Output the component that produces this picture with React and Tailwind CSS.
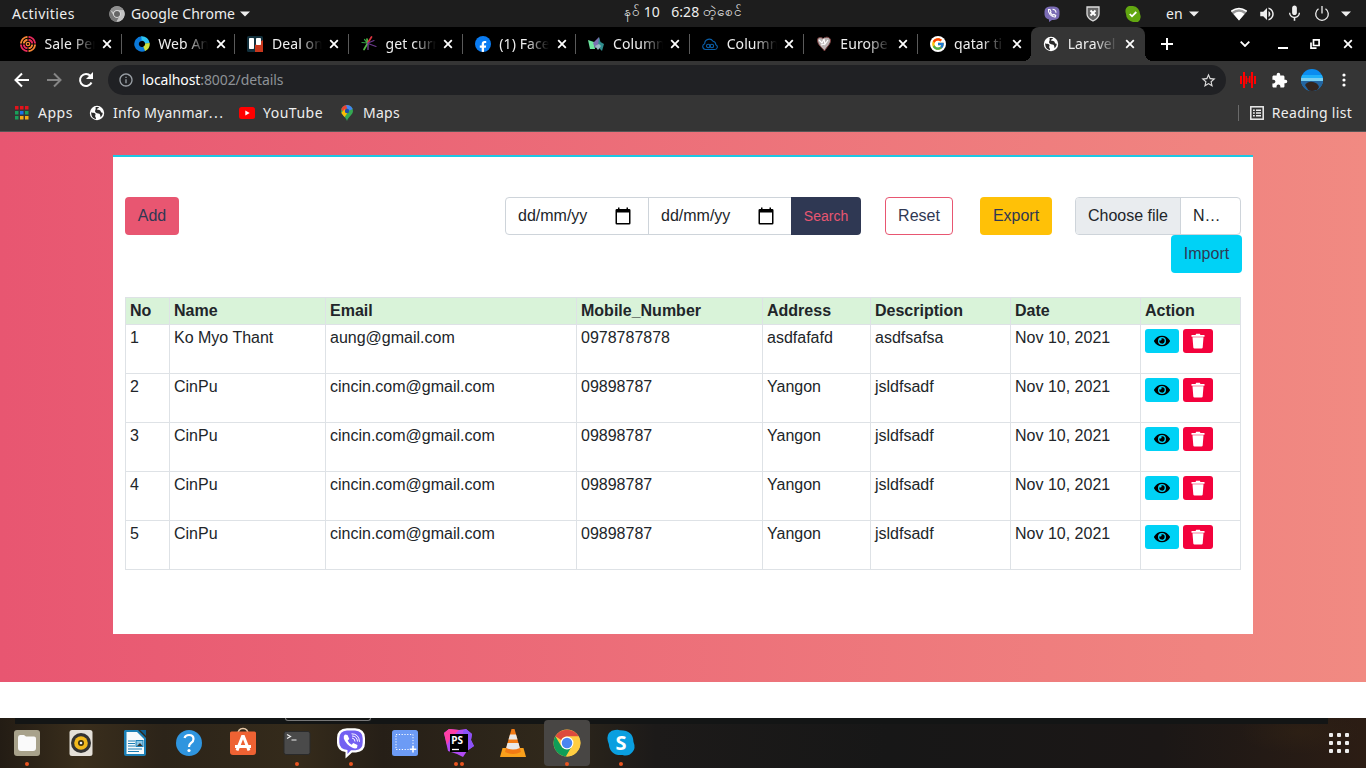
import React from "react";
import { FaEye, FaFacebookF } from "react-icons/fa";
import { MdExtension, MdStarBorder, MdMic, MdVolumeUp, MdInfoOutline } from "react-icons/md";
import { FcGoogle } from "react-icons/fc";

const FADE = "[mask-image:linear-gradient(to_right,black_55%,transparent_100%)]";

function Chrome({ className, mono }) {
  const c = mono ? ["#8f8f8f", "#777", "#c4c4c4", "#666", "#e4e4e4"] : ["#dd4b3e", "#0f9d58", "#ffcd42", "#4a86f0", "#fff"];
  return (
    <svg viewBox="0 0 48 48" className={className}>
      <circle cx="24" cy="24" r="23" fill={c[2]} />
      <path d="M4 12.5A23 23 0 0 1 44 13H24a11 11 0 0 0-10 6z" fill={c[0]} />
      <path d="M4 12.5A23 23 0 0 0 22 47l10-17a11 11 0 0 1-18-1z" fill={c[1]} />
      <path d="M44 13H24a11 11 0 0 1 9 17L23 47A23 23 0 0 0 44 13z" fill={c[2]} />
      <circle cx="24" cy="24" r="11" fill={c[4]} />
      <circle cx="24" cy="24" r="9" fill={c[3]} />
    </svg>
  );
}

function Globe({ className }) {
  return (
    <svg viewBox="0 0 16 16" className={className}>
      <circle cx="8" cy="8" r="7.2" fill="#fff" />
      <path d="M2.200 7.200c1.400.900 2.900.300 4 1.400.900 1-.2 1.600 0 2.800.2.900 1 1.200.8 2.600-3-.4-5-3-4.800-6.800z" fill="#2b2b2b" />
      <path d="M6.500 2.300c1-.5 2.500-.4 3.500 0-.2 1.200-2 1-2.200 2.200 1.700.500 3.700.200 4 1.900.2 1.300 1.100 1 1.900 1.400-.1 2-.9 3.500-2 4.400-.6-1.400-.2-2.400-1.300-3.400-1.300-1-3.300-.4-4.200-1.900-.7-1.400 1.100-2.300.3-4.600z" fill="#2b2b2b" />
    </svg>
  );
}

const favicons = {
  sale: (
    <svg viewBox="0 0 16 16" className="size-4 shrink-0" fill="none" strokeWidth="1.900">
      <path d="M8.500.900A7.200 7.200 0 0 1 15.100 7.500M7.500 15.100A7.200 7.200 0 0 1 .9 8.500" stroke="#e8295c" />
      <path d="M.9 7.500A7.200 7.200 0 0 1 7.500.900M15.100 8.500A7.200 7.200 0 0 1 8.500 15.100" stroke="#f58634" />
      <path d="M8.500 3.700A4.400 4.400 0 0 1 12.300 7.500M7.500 12.300A4.400 4.400 0 0 1 3.700 8.500" stroke="#e8295c" />
      <path d="M3.700 7.500A4.400 4.400 0 0 1 7.500 3.700M12.300 8.500A4.400 4.400 0 0 1 8.500 12.300" stroke="#f58634" />
      <circle cx="8" cy="8" r="1.700" stroke="#f58634" strokeWidth="1.300" />
    </svg>
  ),
  web: (
    <svg viewBox="0 0 16 16" className="size-4 shrink-0" fill="none" strokeWidth="4.600">
      <path d="M8 2.600A5.400 5.400 0 1 0 10.600 12.700" stroke="#0a78d8" />
      <path d="M7.500 2.600A5.400 5.400 0 0 1 13.400 7.500" stroke="#2cc4f4" />
      <path d="M13.400 7.300A5.400 5.400 0 0 1 10.200 12.900" stroke="#cde23c" />
    </svg>
  ),
  trello: (
    <svg viewBox="0 0 16 16" className="size-4 shrink-0">
      <rect width="16" height="16" rx="1.500" fill="#12303c" />
      <path d="M8 16V9l8-5v12z" fill="#c8371d" />
      <rect x="2" y="2" width="5" height="11" rx=".8" fill="#fff" />
      <rect x="9" y="2" width="5" height="7" rx=".8" fill="#fff" />
    </svg>
  ),
  rays: (
    <svg viewBox="0 0 16 16" className="size-4 shrink-0" strokeWidth="1.200" strokeLinecap="round">
      <path d="M6.500 7 1 6.500M6.500 7 3.500 3.500" stroke="#2f9e44" />
      <path d="M6.500 7 6 3M6.500 7.500l-3.500 6" stroke="#54b948" strokeWidth="1.700" />
      <path d="M7 7.500v6" stroke="#7c4a9e" />
      <path d="M7 6.500 10.500 1" stroke="#d9333f" strokeWidth="1.700" />
      <path d="M7 7 13 4.500M7 7.500l8 3" stroke="#6c3a8e" />
    </svg>
  ),
  facebook: (
    <span className="flex size-4 shrink-0 items-end justify-center overflow-hidden rounded-full bg-[#0a7cf2]">
      <FaFacebookF className="size-3 translate-y-px text-white" />
    </span>
  ),
  prism: (
    <svg viewBox="0 0 16 16" className="size-4 shrink-0">
      <path d="M0 4l6 2 1 7-5 0z" fill="#6ee7a0" />
      <path d="M5 7l6-6 1 9-5 2z" fill="#7b70b0" />
      <path d="M11 1l1.500 5L16 8l-2 7-4-4z" fill="#2f8d8d" />
      <path d="M7 10l4-2 2 2-3 4z" fill="#9bb8c4" />
    </svg>
  ),
  cloud: (
    <svg viewBox="0 0 16 16" className="size-4 shrink-0" fill="none" stroke="#0a5ea8" strokeWidth="1.100">
      <path d="M3.500 13.500a3 3 0 0 1-.8-5.800A4.500 4.500 0 0 1 11 5.300a3.600 3.600 0 0 1 2.800 3.400 2.500 2.500 0 0 1-1 4.800z" />
      <circle cx="6.200" cy="10" r="1.700" />
      <circle cx="9.900" cy="10" r="1.700" />
    </svg>
  ),
  heart: (
    <svg viewBox="0 0 16 16" className="size-4 shrink-0">
      <path d="M1.500 4c0-3 4-3 6-1 2-3 6.500-2 7 1 .5 4-4 7-6 11C6.500 12 1.500 9 1.500 4z" fill="#b9b2b2" stroke="#7b3c3c" />
      <path d="M3 4l3 3 2-4 1 5 3-4M5 9l4-1" stroke="#fff" strokeWidth="1.200" fill="none" />
    </svg>
  ),
  google: (
    <span className="flex size-4 shrink-0 items-center justify-center rounded-full bg-white">
      <FcGoogle className="size-[14px]" />
    </span>
  ),
  globe: <Globe className="size-4 shrink-0" />,
};

function Close({ className = "" }) {
  return (
    <svg viewBox="0 0 10 10" className={"size-2.5 shrink-0 " + className} stroke="#fff" strokeWidth="1.800">
      <path d="M1.200 1.200l7.600 7.600M8.800 1.200 1.200 8.800" />
    </svg>
  );
}

const tabs = [
  ["sale", "Sale Per"],
  ["web", "Web An"],
  ["trello", "Deal on"],
  ["rays", "get curr"],
  ["facebook", "(1) Face"],
  ["prism", "Column"],
  ["cloud", "Column"],
  ["heart", "Europe"],
  ["google", "qatar ti"],
  ["globe", "Laravel"],
];

function TopBar() {
  return (
    <header className="grid h-[27px] grid-cols-[1fr_auto_1fr] items-center bg-[#1d1d1d] text-[14px] text-[#eee]">
      <div className="flex items-center pl-3">
        <span className="w-[97px] tracking-[0.45px]">Activities</span>
        <Chrome mono className="size-4" />
        <span className="ml-1.5 w-[105px] whitespace-nowrap tracking-[0.05px]">Google Chrome</span>
        <Caret className="ml-1" />
      </div>
      <div className="flex h-[27px] items-center whitespace-pre pb-[4px] text-[14px]">
        <span className="text-[13.500px]">နဝ်</span>
        <span className="tracking-[0.1px]"> 10   6:28 </span>
        <span className="text-[13.500px]">တဲ့စေင်</span>
      </div>
      <div className="flex h-full items-center justify-end">
        <svg viewBox="0 0 16 16" className="mr-[25px] size-4">
          <path d="M6 .5h4q5.500.500 5.500 5v3q0 5-5.500 5.500H8L5 16v-2.500Q.8 12.500.5 8.500v-3Q.5 1 6 .500z" fill="#7b6cb5" />
          <path d="M4.500 3.500l1.500 0 1 2.300-.8.900 2.500 2.500 1-.8 2 1-.4 1.600C7.500 11.500 3.700 7 4.500 3.500zM8.500 3.200a3.500 3.500 0 0 1 3.500 3.500" fill="none" stroke="#fff" strokeWidth="1.100" />
        </svg>
        <svg viewBox="0 0 16 16" className="mr-6 size-4">
          <path d="M2 1h12v7q0 4-6 7-6-3-6-7z" fill="#666" stroke="#ddd" strokeWidth="1.300" />
          <path d="M5.500 4.500l5 5M10.500 4.500l-5 5" stroke="#fff" strokeWidth="2" />
        </svg>
        <svg viewBox="0 0 16 16" className="mr-[25px] size-4">
          <path d="M4 0h4a8 8 0 0 1 7 8q2 5-2 8H8A8 8 0 0 1 1 8Q-1 2 4 0z" fill="#62a711" />
          <path d="M4.800 8l2.200 2.300L11.300 6" stroke="#fff" strokeWidth="1.800" fill="none" />
        </svg>
        <span className="w-[23px]">en</span>
        <Caret className="mr-[32px]" />
        <svg viewBox="0 0 16 14" className="mr-[11px] h-3.5 w-4">
          <path d="M0 4.500Q8-2 16 4.500L8 13.500z" fill="#999" />
          <path d="M2.500 7Q8 2.500 13.500 7L8 13.500z" fill="#fff" />
          <path d="M.3 4.300Q8-1.500 15.700 4.300" stroke="#fff" strokeWidth="1.500" fill="none" />
        </svg>
        <MdVolumeUp className="mr-[9px] size-[18px] text-[#eee]" />
        <MdMic className="mr-2.5 size-[19px] text-[#eee]" />
        <svg viewBox="0 0 16 16" className="mr-[11px] size-4" fill="none" stroke="#eee" strokeWidth="1.300">
          <path d="M4.500 2.800a6.300 6.300 0 1 0 7 0M8 0v7.500" />
        </svg>
        <Caret className="mr-[15px]" />
      </div>
    </header>
  );
}

function Caret({ className = "" }) {
  return (
    <svg viewBox="0 0 10 6" className={"h-1.5 w-2.5 shrink-0 " + className}>
      <path d="M0 .5h10L5 5.500z" fill="#eee" />
    </svg>
  );
}

function TabStrip() {
  return (
    <div className="flex h-[34px] bg-black pl-[8px] text-[14px] text-[#eee]">
      {tabs.map(([icon, title], i) => {
        const active = i === 9;
        return (
          <div
            key={i}
            className={
              "relative flex w-[113.700px] shrink-0 items-center pl-[12px] " +
              (active ? "rounded-t-lg bg-[#353535]" : "")
            }
          >
            {favicons[icon]}
            <span className={"ml-[8.500px] w-[50px] whitespace-nowrap pb-px tracking-[0.1px] " + FADE}>{title}</span>
            <Close className="ml-[7.500px]" />
            {i < 8 && <span className="absolute right-0 top-[7px] h-5 w-px bg-[#5a5a5a]" />}
            {active && (
              <>
                <span className="absolute -left-2 bottom-0 size-2 bg-[radial-gradient(circle_at_0_0,#000_8px,#353535_8px)]" />
                <span className="absolute -right-2 bottom-0 size-2 bg-[radial-gradient(circle_at_100%_0,#000_8px,#353535_8px)]" />
              </>
            )}
          </div>
        );
      })}
      <svg viewBox="0 0 12 12" className="ml-4 size-3 self-center" stroke="#fff" strokeWidth="2">
        <path d="M6 0v12M0 6h12" />
      </svg>
      <div className="ml-auto flex items-center pr-[13px]">
        <svg viewBox="0 0 10 6" className="mr-7 h-1.5 w-2.5" fill="none" stroke="#fff" strokeWidth="1.800">
          <path d="M.7.700 5 5 9.300.700" />
        </svg>
        <span className="mr-[22px] mt-2 h-[2px] w-[10px] bg-white" />
        <svg viewBox="0 0 10 10" className="mr-[23px] size-2.5" fill="none" stroke="#fff" strokeWidth="1.700">
          <path d="M3.500.900h5.600v5.600H3.500zM1 3.500v5.600h5.500" />
        </svg>
        <Close />
      </div>
    </div>
  );
}

function AddressBar() {
  return (
    <div className="flex h-[38px] items-center bg-[#353535] pl-[14px] text-[14px]">
      <svg viewBox="0 0 16 16" className="size-4" fill="none" stroke="#fff" strokeWidth="2">
        <path d="M15 8H2M8 1.500 1.500 8 8 14.500" />
      </svg>
      <svg viewBox="0 0 16 16" className="ml-4 size-4" fill="none" stroke="#858585" strokeWidth="2">
        <path d="M1 8h13M8 1.500 14.500 8 8 14.500" />
      </svg>
      <svg viewBox="0 0 16 16" className="ml-4 size-4" fill="none" stroke="#fff" strokeWidth="2">
        <path d="M13.500 10.500A6 6 0 1 1 12.500 4" />
        <path d="M15 0v7H8z" fill="#fff" stroke="none" />
      </svg>
      <div className="ml-[14px] flex h-[30px] w-[1118px] items-center rounded-full bg-[#202124] pl-[10px] pr-[9.500px]">
        <MdInfoOutline className="size-4 text-[#9aa0a6]" />
        <span className="ml-2 pb-0.5 tracking-[-0.1px] text-white">localhost</span>
        <span className="pb-0.5 tracking-[-0.1px] text-[#8e9297]">:8002/details</span>
        <MdStarBorder className="ml-auto size-[17px] text-[#ddd]" />
      </div>
      <svg viewBox="0 0 16 16" className="ml-[14px] size-4" fill="#f00">
        <path d="M0 4h2v8H0zM3 0h2v16H3zM5.500 4h1.500v8H5.500zM7.500 6h1v4h-1zM9 4h1.500v7H9zM11 0h2v16h-2zM14 4h2v8h-2z" />
      </svg>
      <MdExtension className="ml-[15px] size-[17px] text-white" />
      <svg viewBox="0 0 22 22" className="ml-[13px] size-[22px]">
        <clipPath id="avatar"><circle cx="11" cy="11" r="11" /></clipPath>
        <g clipPath="url(#avatar)">
          <rect width="22" height="22" fill="#0a8cf0" />
          <rect y="6" width="22" height="3" fill="#1fb0fa" />
          <rect y="9" width="22" height="3" fill="#7ad0f2" />
          <rect y="12" width="22" height="11" fill="#2465a0" />
          <path d="M4 16q3-4 8-3t6 5l-2 4H8z" fill="#33251f" />
        </g>
      </svg>
      <svg viewBox="0 0 4 14" className="ml-[19px] h-3.5 w-1" fill="#fff">
        <circle cx="2" cy="2" r="1.600" /><circle cx="2" cy="7" r="1.600" /><circle cx="2" cy="12" r="1.600" />
      </svg>
    </div>
  );
}

function Bookmarks() {
  return (
    <div className="flex h-[33px] items-center border-b border-[#555] bg-[#353535] pb-1 pl-[15px] text-[14px] text-[#eee]">
      <svg viewBox="0 0 14 14" className="size-[14px]">
        <path d="M0 0h3.500v3.500H0zM5 0h3.500v3.500H5zM10 0h3.500v3.500H10z" fill="#e3131b" />
        <path d="M0 5h3.500v3.500H0zM10 5h3.500v3.500H10z" fill="#19a05a" /><path d="M5 5h3.500v3.500H5z" fill="#1a73e8" />
        <path d="M0 10h3.500v3.500H0z" fill="#19a05a" /><path d="M5 10h3.500v3.500H5zM10 10h3.500v3.500H10z" fill="#f9ab16" />
      </svg>
      <span className="ml-[9px] w-[51px] pb-0.5 tracking-[0.5px]">Apps</span>
      <Globe className="size-4" />
      <span className="ml-2 w-[126px] whitespace-nowrap pb-0.5 tracking-[0.2px]">
        Info Myanmar<span className="tracking-[1.500px]">...</span>
      </span>
      <svg viewBox="0 0 16 12" className="h-3 w-4">
        <rect width="16" height="12" rx="2.500" fill="#f00" /><path d="M6.300 3.500 10.700 6 6.300 8.500z" fill="#fff" />
      </svg>
      <span className="ml-2 w-[78px] pb-0.5 tracking-[0.5px]">YouTube</span>
      <svg viewBox="0 0 12 16" className="h-4 w-3">
        <clipPath id="pin"><path d="M6 0a6 6 0 0 1 6 6c0 4-4.500 5-6 10C4.500 11 0 10 0 6a6 6 0 0 1 6-6z" /></clipPath>
        <g clipPath="url(#pin)">
          <rect width="12" height="16" fill="#34a853" />
          <path d="M0 0h8L3 8 0 4z" fill="#ea4335" /><path d="M5 0h7v4L7 6z" fill="#4285f4" /><path d="M0 11V8l4-4 3 3-4 6z" fill="#fbbc04" />
        </g>
        <circle cx="6" cy="6" r="2.200" fill="#1d4fa8" />
      </svg>
      <span className="ml-2.5 pb-0.5 tracking-[0.250px]">Maps</span>
      <div className="ml-auto flex items-center pr-[14px]">
        <span className="mr-[11px] h-4 w-px bg-[#6a6a6a]" />
        <svg viewBox="0 0 14 14" className="size-[14px]" fill="none" stroke="#eee" strokeWidth="1.500">
          <rect x=".8" y=".8" width="12.400" height="12.400" />
          <path d="M3 4.200h1.800M6 4.200h5M3 7h1.800M6 7h5M3 9.800h1.800M6 9.800h5" />
        </svg>
        <span className="ml-2 pb-0.5 tracking-[0.3px]">Reading list</span>
      </div>
    </div>
  );
}

function DateField({ first }) {
  return (
    <div className={"flex h-[38px] w-[144px] items-center justify-between border border-[#ced4da] pl-3 pr-[17px] " + (first ? "rounded-l" : "-ml-px")}>
      <span className="w-[70px] whitespace-nowrap">dd/mm/yy</span>
      <svg viewBox="0 0 16 18" className="mb-px h-[18px] w-4">
        <path d="M1.800 2h12.400a1.300 1.300 0 0 1 1.300 1.300v12.900a1.300 1.300 0 0 1-1.300 1.300H1.800a1.300 1.300 0 0 1-1.300-1.300V3.300A1.300 1.300 0 0 1 1.800 2zM2 5.500V16h12V5.500z" fill="#000" fillRule="evenodd" />
        <path d="M3 .5h1.500V3H3zM11.500.500H13V3h-1.500z" fill="#000" />
      </svg>
    </div>
  );
}

const columns = ["No", "Name", "Email", "Mobile_Number", "Address", "Description", "Date", "Action"];
const rows = [
  ["1", "Ko Myo Thant", "aung@gmail.com", "0978787878", "asdfafafd", "asdfsafsa", "Nov 10, 2021"],
  ...["2", "3", "4", "5"].map((n) => [n, "CinPu", "cincin.com@gmail.com", "09898787", "Yangon", "jsldfsadf", "Nov 10, 2021"]),
];

function Page() {
  return (
    <main className="h-[586px] bg-white font-['Liberation_Sans',sans-serif] text-[16px] leading-6 text-[#212529]">
      <section className="flex h-[550px] justify-center bg-[linear-gradient(to_right,#e85671_0%,#f18a82_100%)] pt-[23px]">
        <div className="h-[479px] w-[1140px] border-t-2 border-[#1cc8e4] bg-white px-3 pt-10">
          <div className="flex h-[100px] items-start">
            <button className="h-[38px] w-[54px] shrink-0 rounded bg-[#e85671] text-[#2f3853]">Add</button>
            <div className="ml-[326px] flex shrink-0">
              <DateField first />
              <DateField />
              <button className="-ml-px h-[38px] w-[70px] rounded-r bg-[#2f3853] text-[14px] text-[#e85671]">Search</button>
            </div>
            <button className="ml-6 h-[38px] w-[68px] shrink-0 rounded border border-[#e85671] text-[#2f3853]">Reset</button>
            <button className="ml-[27px] h-[38px] w-[72px] shrink-0 rounded bg-[#ffc107] text-[#2f3853]">Export</button>
            <div className="ml-[23px] flex w-[167px] shrink-0 flex-col">
              <div className="flex h-[38px] w-[166px] items-center overflow-hidden rounded border border-[#ced4da]">
                <span className="flex h-full w-[105px] items-center justify-center border-r border-[#ced4da] bg-[#e9ecef]">Choose file</span>
                <span className="ml-3">N…</span>
              </div>
              <button className="h-[38px] w-[71px] self-end rounded bg-[#00d2f6] text-[#2f3853]">Import</button>
            </div>
          </div>
          <table className="w-[1116px] table-fixed border-separate border-spacing-0 border-l border-t border-[#dee2e6] text-left leading-[18px]">
            <colgroup>
              <col className="w-[44px]" /><col className="w-[156px]" /><col className="w-[251px]" /><col className="w-[186px]" />
              <col className="w-[108px]" /><col className="w-[140px]" /><col className="w-[130px]" /><col className="w-[100px]" />
            </colgroup>
            <thead>
              <tr className="h-[27px] bg-[#d9f3d9]">
                {columns.map((c) => (
                  <th key={c} className="border-b border-r border-[#dee2e6] px-1 py-0 align-middle font-bold">{c}</th>
                ))}
              </tr>
            </thead>
            <tbody>
              {rows.map((r) => (
                <tr key={r[0]} className="h-[49px]">
                  {r.map((c, i) => (
                    <td key={i} className="border-b border-r border-[#dee2e6] px-1 pb-0 pt-1 align-top">{c}</td>
                  ))}
                  <td className="border-b border-r border-[#dee2e6] px-1 pb-0 pt-1 align-top">
                    <div className="flex gap-1">
                      <button className="flex h-6 w-[34px] items-center justify-center rounded-[3px] bg-[#00d2f6]">
                        <FaEye className="mb-px size-4 text-black" />
                      </button>
                      <button className="flex h-6 w-[30px] items-center justify-center rounded-[3px] bg-[#f3023c]">
                        <svg viewBox="0 0 14 16" className="mb-px h-4 w-3.5" fill="#fff">
                          <path d="M.5 2h4l.7-1.300h3.600L9.500 2h4v1.700H.5zM1.500 4.300h11L11.700 14.500q-.1 1-1.200 1h-7q-1.100 0-1.200-1z" />
                        </svg>
                      </button>
                    </div>
                  </td>
                </tr>
              ))}
            </tbody>
          </table>
        </div>
      </section>
    </main>
  );
}

const dock = [
  ["files", 1, (
    <>
      <rect x="1" y="1" width="26" height="26" rx="3" fill="#a8a28b" />
      <path d="M5 8.500q0-2.500 2-2.500h4l2 1.500h8q2 0 2 2V19q0 3-3 3H8q-3 0-3-3z" fill="#fafafa" />
    </>
  )],
  ["music", 0, (
    <>
      <rect x="2.500" y="1" width="23" height="26" rx="2.500" fill="#e4e0d8" />
      <circle cx="14" cy="14" r="10" fill="#333" /><circle cx="14" cy="14" r="6.800" fill="#f2b91d" />
      <circle cx="14" cy="14" r="3" fill="#3a2e10" /><circle cx="14" cy="14" r="1.300" fill="#eee" />
    </>
  )],
  ["writer", 0, (
    <>
      <path d="M4 1h13l8 8v16q0 2-2 2H5q-2 0-2-2V2z" fill="#1b7fb5" />
      <path d="M19 1h6v6z" fill="#0f5f8f" />
      <path d="M5.500 3H16l7 7v15H5.500z" fill="#f6fafc" />
      <path d="M7 12h7M7 14.500h7M7 17h7M7 20h14M7 22.500h11" stroke="#1b7fb5" strokeWidth="1.200" />
      <rect x="15" y="11.500" width="7" height="6" fill="#8ac6e6" stroke="#1b7fb5" /><path d="M16 17l3-3 2.500 3z" fill="#333" />
    </>
  )],
  ["help", 0, (
    <>
      <circle cx="14" cy="14" r="13" fill="#2f95df" />
      <path d="M9.500 9q1-3 4.500-3 4.500 0 4.500 4 0 2.500-2.500 4-2 1.500-2 4" stroke="#fff" strokeWidth="2.200" fill="none" />
      <circle cx="14" cy="21.500" r="1.600" fill="#fff" />
    </>
  )],
  ["store", 0, (
    <>
      <path d="M9 5.500q0-6 5-6t5 6" stroke="#e8c9a8" strokeWidth="1.500" fill="none" />
      <path d="M1 4q0-1.500 1.500-1.500h23Q27 2.500 27 4v19q0 3-3 3H4q-3 0-3-3z" fill="#ee6233" />
      <path d="M8 21.500 13.500 7.500h1L20 21.500M6 17.500h16" stroke="#fff" strokeWidth="3" fill="none" />
    </>
  )],
  ["terminal", 1, (
    <>
      <rect x="1" y="2.500" width="26" height="23" rx="2" fill="#4a4a4a" stroke="#2a2a2a" />
      <path d="M4 5.500l3.500 2L4 9.500M8.500 11h5" stroke="#eee" strokeWidth="1.200" fill="none" />
    </>
  )],
  ["viber", 1, (
    <>
      <path d="M10-.7h8Q28-.2 28 9v5q0 8.500-9 9.500h-4L8.500 29.500V23Q0 21.500 0 14V9Q0-.2 10-.7z" fill="#fff" />
      <path d="M10 1.500h8q7.700.500 7.700 8v4q0 7-7.200 7.800h-4.500L10.500 25v-4Q2.300 20 2.300 13.500v-4q0-7.500 7.700-8z" fill="#7360f2" />
      <path d="M8 5.500l2.500.500 1.800 4-1.600 1.500q1 3 4 4.200l1.500-1.600 4.300 2-.5 3q-2 1-5-.5-6-3-8.200-9-.5-3 1.200-4.100z" fill="#fff" />
      <path d="M15 9q3 .5 3 3.500M15 7q5 0 5.500 5.500M14.500 4.800q7.500 0 8 8" stroke="#fff" strokeWidth="1" fill="none" />
    </>
  )],
  ["shot", 0, (
    <>
      <rect x="1" y="1" width="26" height="26" rx="2.500" fill="#6c9bf5" />
      <rect x="5" y="5.500" width="17" height="15" fill="none" stroke="#fff" strokeDasharray="1.200 1.600" />
      <path d="M22 17v6.500M18.800 20.200h6.500" stroke="#fff" strokeWidth="1.500" />
    </>
  )],
  ["phpstorm", 2, (
    <>
      <path d="M-1 4l5-4 10 1 7-1 6 5-1 6 3 6-7 5-4 6-6-3-9-3z" fill="#b24bf3" />
      <path d="M-1 4l5-4 10 1-9 9-3 6z" fill="#ff3fa4" /><path d="M18 2l3-2 6 5-1 6 3 6-9 6z" fill="#8a52f8" />
      <rect x="5" y="5" width="18" height="18" fill="#000" />
      <text x="6.300" y="15" fontSize="10" fontWeight="bold" fontFamily="Noto Sans, sans-serif" fill="#fff">PS</text>
      <path d="M7 20.500h7" stroke="#fff" strokeWidth="1.300" />
    </>
  )],
  ["vlc", 0, (
    <>
      <path d="M3.500 19h21l2.500 9H1z" fill="#f9a01b" />
      <path d="M12.500 0h3L22 23q-8 4-16 0z" fill="#f27a14" />
      <path d="M11 5.500h6l1.500 5h-9zM8.500 14h11l1.300 5q-6.800 3-13.600 0z" fill="#e8e8e8" />
    </>
  )],
  ["chrome", 1, null],
  ["skype", 1, (
    <>
      <path d="M8 1q3-.8 5 .3Q26 1 26.500 13q2.500 6-1 10-4 5-10 3Q3 27 1.800 15-1 8 2 4 4.500 1 8 1z" fill="#0a9fe0" />
      <text x="14" y="21" textAnchor="middle" fontSize="20" fontWeight="bold" fontFamily="Noto Sans, sans-serif" fill="#fff">S</text>
    </>
  )],
];

function Dock() {
  return (
    <footer className="relative flex h-[50px] bg-[radial-gradient(ellipse_60px_22px_at_1300px_14px,#33241480,transparent),linear-gradient(to_right,#231c14_0%,#3a2e1c_6%,#2c2419_12%,#352b1b_22%,#261f17_28%,#30281b_40%,#1c1a19_48%,#171717_65%,#1b1716_85%,#2c1d14_100%)]">
      <div className="absolute left-[15px] top-0 h-1.5 w-[1313px] bg-[#131515]" />
      <div className="absolute left-[285px] top-0 h-[3px] w-[86px] rounded-b border border-t-0 border-[#777]" />
      {dock.map(([name, dots, art]) => (
        <div key={name} className="relative flex w-[54px] justify-center">
          <div className={"mt-[2px] flex h-[46px] w-[46px] justify-center rounded pt-[9px] " + (name === "chrome" ? "bg-[#484644]" : "")}>
            {art ? <svg viewBox="0 0 28 28" className="size-7 overflow-visible">{art}</svg> : <Chrome className="size-7" />}
          </div>
          <div className="absolute bottom-[2px] flex gap-[2px]">
            {Array.from({ length: dots }, (_, i) => <span key={i} className="size-1 rounded-full bg-[#e95420]" />)}
          </div>
        </div>
      ))}
      <div className="ml-auto mr-[17px] mt-[15px] grid h-5 w-5 grid-cols-3 gap-[4px] self-start">
        {Array.from({ length: 9 }, (_, i) => <span key={i} className="size-1 rounded-[1px] bg-[#eee]" />)}
      </div>
    </footer>
  );
}

export default function App() {
  return (
    <div className="h-[768px] w-[1366px] overflow-hidden font-['Noto_Sans',sans-serif]">
      <TopBar />
      <TabStrip />
      <AddressBar />
      <Bookmarks />
      <Page />
      <Dock />
    </div>
  );
}
